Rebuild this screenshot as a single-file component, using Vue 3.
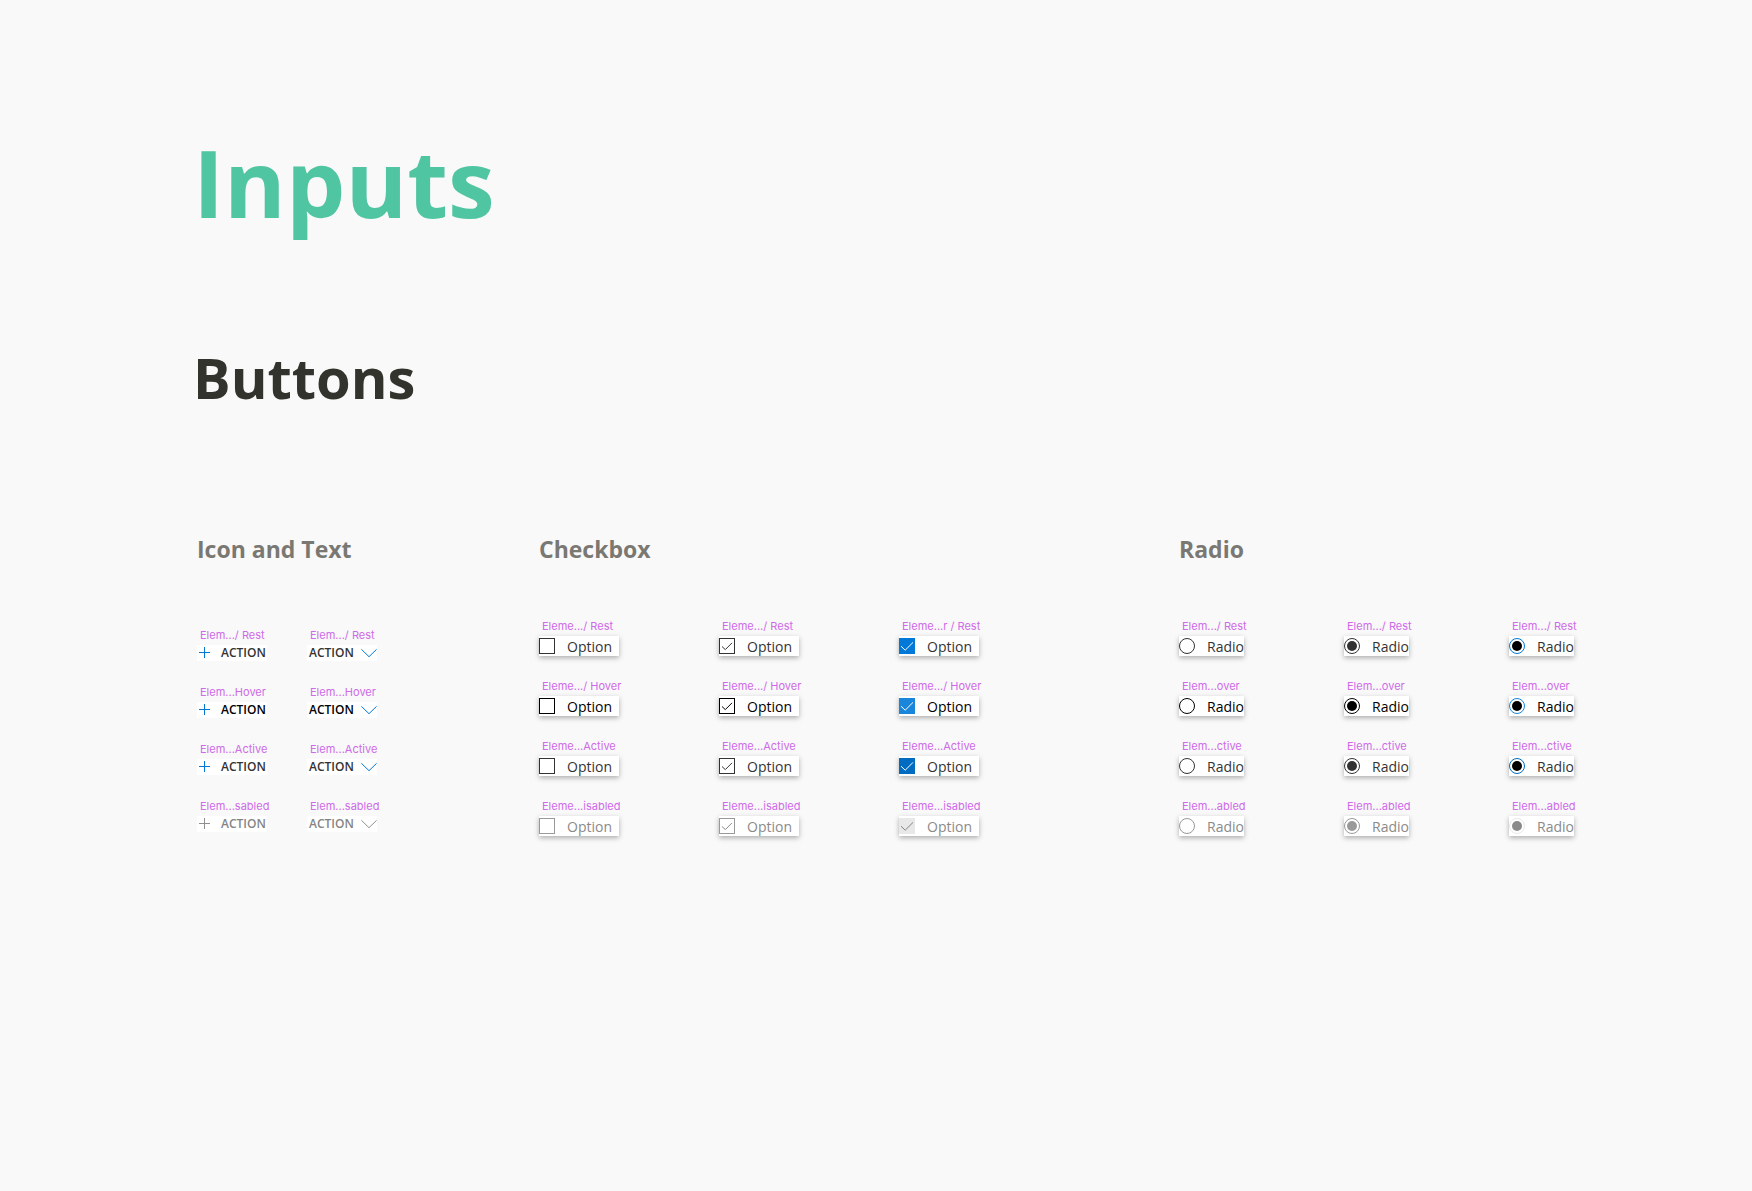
<script setup>
const states = ['rest', 'hover', 'active', 'disabled']

const actionLabels = ['Elem.../ Rest', 'Elem...Hover', 'Elem...Active', 'Elem...sabled']
const actionColumns = [
  { kind: 'leading', labels: actionLabels },
  { kind: 'trailing', labels: actionLabels }
]

const checkLabels = ['Eleme.../ Rest', 'Eleme.../ Hover', 'Eleme...Active', 'Eleme...isabled']
const checkColumns = [
  { kind: 'empty', checked: false, labels: checkLabels },
  { kind: 'outline', checked: true, labels: checkLabels },
  { kind: 'filled', checked: true, labels: ['Eleme...r / Rest', ...checkLabels.slice(1)] }
]

const radioLabels = ['Elem.../ Rest', 'Elem...over', 'Elem...ctive', 'Elem...abled']
const radioColumns = [
  { kind: 'empty', checked: false, labels: radioLabels },
  { kind: 'outline', checked: true, labels: radioLabels },
  { kind: 'accent', checked: true, labels: radioLabels }
]
</script>

<template>
  <main class="page">
    <h1>Inputs</h1>
    <h2>Buttons</h2>

    <div class="sections">
      <section>
        <h3>Icon and Text</h3>
        <div class="columns actions">
          <div v-for="col in actionColumns" :key="col.kind" class="column">
            <div v-for="(state, i) in states" :key="state" class="sample">
              <p class="caption">{{ col.labels[i] }}</p>
              <button type="button" class="action" :class="[col.kind, state]" :disabled="state === 'disabled'">
                <svg v-if="col.kind === 'leading'" class="plus" viewBox="0 0 11 12" aria-hidden="true">
                  <path d="M5.5 0V11M0 5.5H11" />
                </svg>
                <span>ACTION</span>
                <svg v-if="col.kind === 'trailing'" class="chevron" viewBox="0 0 16 10" aria-hidden="true">
                  <path d="M.4 1.3L8 8.7L15.6 1.3" />
                </svg>
              </button>
            </div>
          </div>
        </div>
      </section>

      <section>
        <h3>Checkbox</h3>
        <div class="columns checks">
          <div v-for="col in checkColumns" :key="col.kind" class="column">
            <div v-for="(state, i) in states" :key="state" class="sample">
              <p class="caption">{{ col.labels[i] }}</p>
              <label class="option" :class="[col.kind, state]">
                <span class="control">
                  <input type="checkbox" :checked="col.checked" :disabled="state === 'disabled'" />
                  <svg v-if="col.kind === 'outline'" class="tick" viewBox="0 0 16 16" aria-hidden="true">
                    <path d="M3 8.5L6.3 11.6L13 4.9" />
                  </svg>
                  <svg v-if="col.kind === 'filled'" class="tick" viewBox="0 0 16 16" aria-hidden="true">
                    <path d="M2 8.2L6.2 12.2L14 4.4" />
                  </svg>
                </span>
                <span class="text">Option</span>
              </label>
            </div>
          </div>
        </div>
      </section>

      <section>
        <h3>Radio</h3>
        <div class="columns radios">
          <div v-for="col in radioColumns" :key="col.kind" class="column">
            <div v-for="(state, i) in states" :key="state" class="sample">
              <p class="caption">{{ col.labels[i] }}</p>
              <label class="option" :class="[col.kind, state]">
                <span class="control">
                  <input
                    type="radio"
                    :name="`${col.kind}-${state}`"
                    :checked="col.checked"
                    :disabled="state === 'disabled'"
                  />
                </span>
                <span class="text">Radio</span>
              </label>
            </div>
          </div>
        </div>
      </section>
    </div>
  </main>
</template>

<style>
body {
  margin: 0;
  background: #f9f9f9;
}
</style>

<style scoped>
.page {
  box-sizing: border-box;
  min-height: 100vh;
  padding: 116px 177px 116px 197px;
  font-family: "Segoe UI", "Open Sans", "Noto Sans", sans-serif;
}

h1,
h2,
h3,
p {
  margin: 0;
  white-space: nowrap;
}

h1 {
  margin-left: -4px;
  font-size: 94px;
  line-height: 132px;
  font-weight: 700;
  color: #50c5a1;
}

h2 {
  margin: 89px 0 0 -4px;
  font-size: 56px;
  line-height: 80px;
  font-weight: 700;
  color: #33332d;
}

.sections {
  display: grid;
  grid-template-columns: 342fr 640fr 396fr;
  margin-top: 116px;
}

h3 {
  font-size: 23px;
  line-height: 32px;
  font-weight: 700;
  color: #7a7872;
}

.columns {
  display: flex;
  gap: 100px;
  margin-top: 53px;
}

.actions {
  gap: 40px;
  margin-top: 62px;
}

.column {
  display: flex;
  flex-direction: column;
  gap: 22px;
}

.actions .column {
  gap: 23px;
  width: 70px;
}

.checks .column {
  width: 80px;
}

.radios .column {
  width: 65px;
}

.caption {
  margin-bottom: 2px;
  padding-left: 3px;
  font-family: Inter, sans-serif;
  font-size: 11px;
  line-height: 16px;
  color: #cf6ae8;
}

.action {
  display: flex;
  align-items: center;
  width: 100%;
  height: 16px;
  padding: 0 0 0 2px;
  border: 0;
  background: #fff;
  font: 600 12px/16px "Segoe UI", "Open Sans", "Noto Sans", sans-serif;
  color: #333;
}

.leading {
  gap: 11px;
}

.trailing {
  justify-content: space-between;
}

.action.hover {
  color: #000;
}

.action.disabled {
  color: #858585;
}

.action svg {
  flex: none;
  fill: none;
  stroke: #0078d7;
}

.plus {
  width: 11px;
  height: 12px;
}

.chevron {
  width: 16px;
  height: 10px;
}

.action.disabled svg {
  stroke: #8f8f8f;
}

.option {
  display: flex;
  align-items: center;
  gap: 12px;
  height: 20px;
  background: #fff;
  box-shadow: 0 2px 5px rgba(0, 0, 0, 0.3);
  font-size: 14px;
  line-height: 18px;
  color: #333;
}

.text {
  padding-top: 2px;
}

.option.hover {
  color: #000;
}

.option.disabled {
  color: #8a8a8a;
}

.control {
  position: relative;
  flex: none;
  width: 16px;
  height: 16px;
}

input {
  display: grid;
  place-items: center;
  box-sizing: border-box;
  width: 16px;
  height: 16px;
  margin: 0;
  border: 1px solid currentColor;
  appearance: none;
  color: inherit;
}

.disabled input {
  color: #999;
}

.tick {
  position: absolute;
  inset: 0;
  width: 16px;
  height: 16px;
  fill: none;
  stroke: currentColor;
  pointer-events: none;
}

.filled input {
  border: 0;
  background: #0078d7;
}

.filled .tick {
  stroke: #fff;
}

.filled.hover input {
  background: #1a86db;
}

.filled.active input {
  background: #006cc1;
}

.filled.disabled input {
  background: #e8e8e8;
}

.filled.disabled .tick {
  stroke: #858585;
}

input[type="radio"] {
  border-radius: 50%;
}

input[type="radio"]:checked::before {
  content: "";
  width: 10px;
  height: 10px;
  border-radius: 50%;
  background: currentColor;
}

.accent input[type="radio"] {
  border-color: #0078d7;
  color: #000;
}

.accent.hover input[type="radio"] {
  border-color: #1a86db;
}

.accent.active input[type="radio"] {
  border-color: #006cc1;
}

.accent.disabled input[type="radio"] {
  border-color: #e8e8e8;
  color: #8a8a8a;
}
</style>
